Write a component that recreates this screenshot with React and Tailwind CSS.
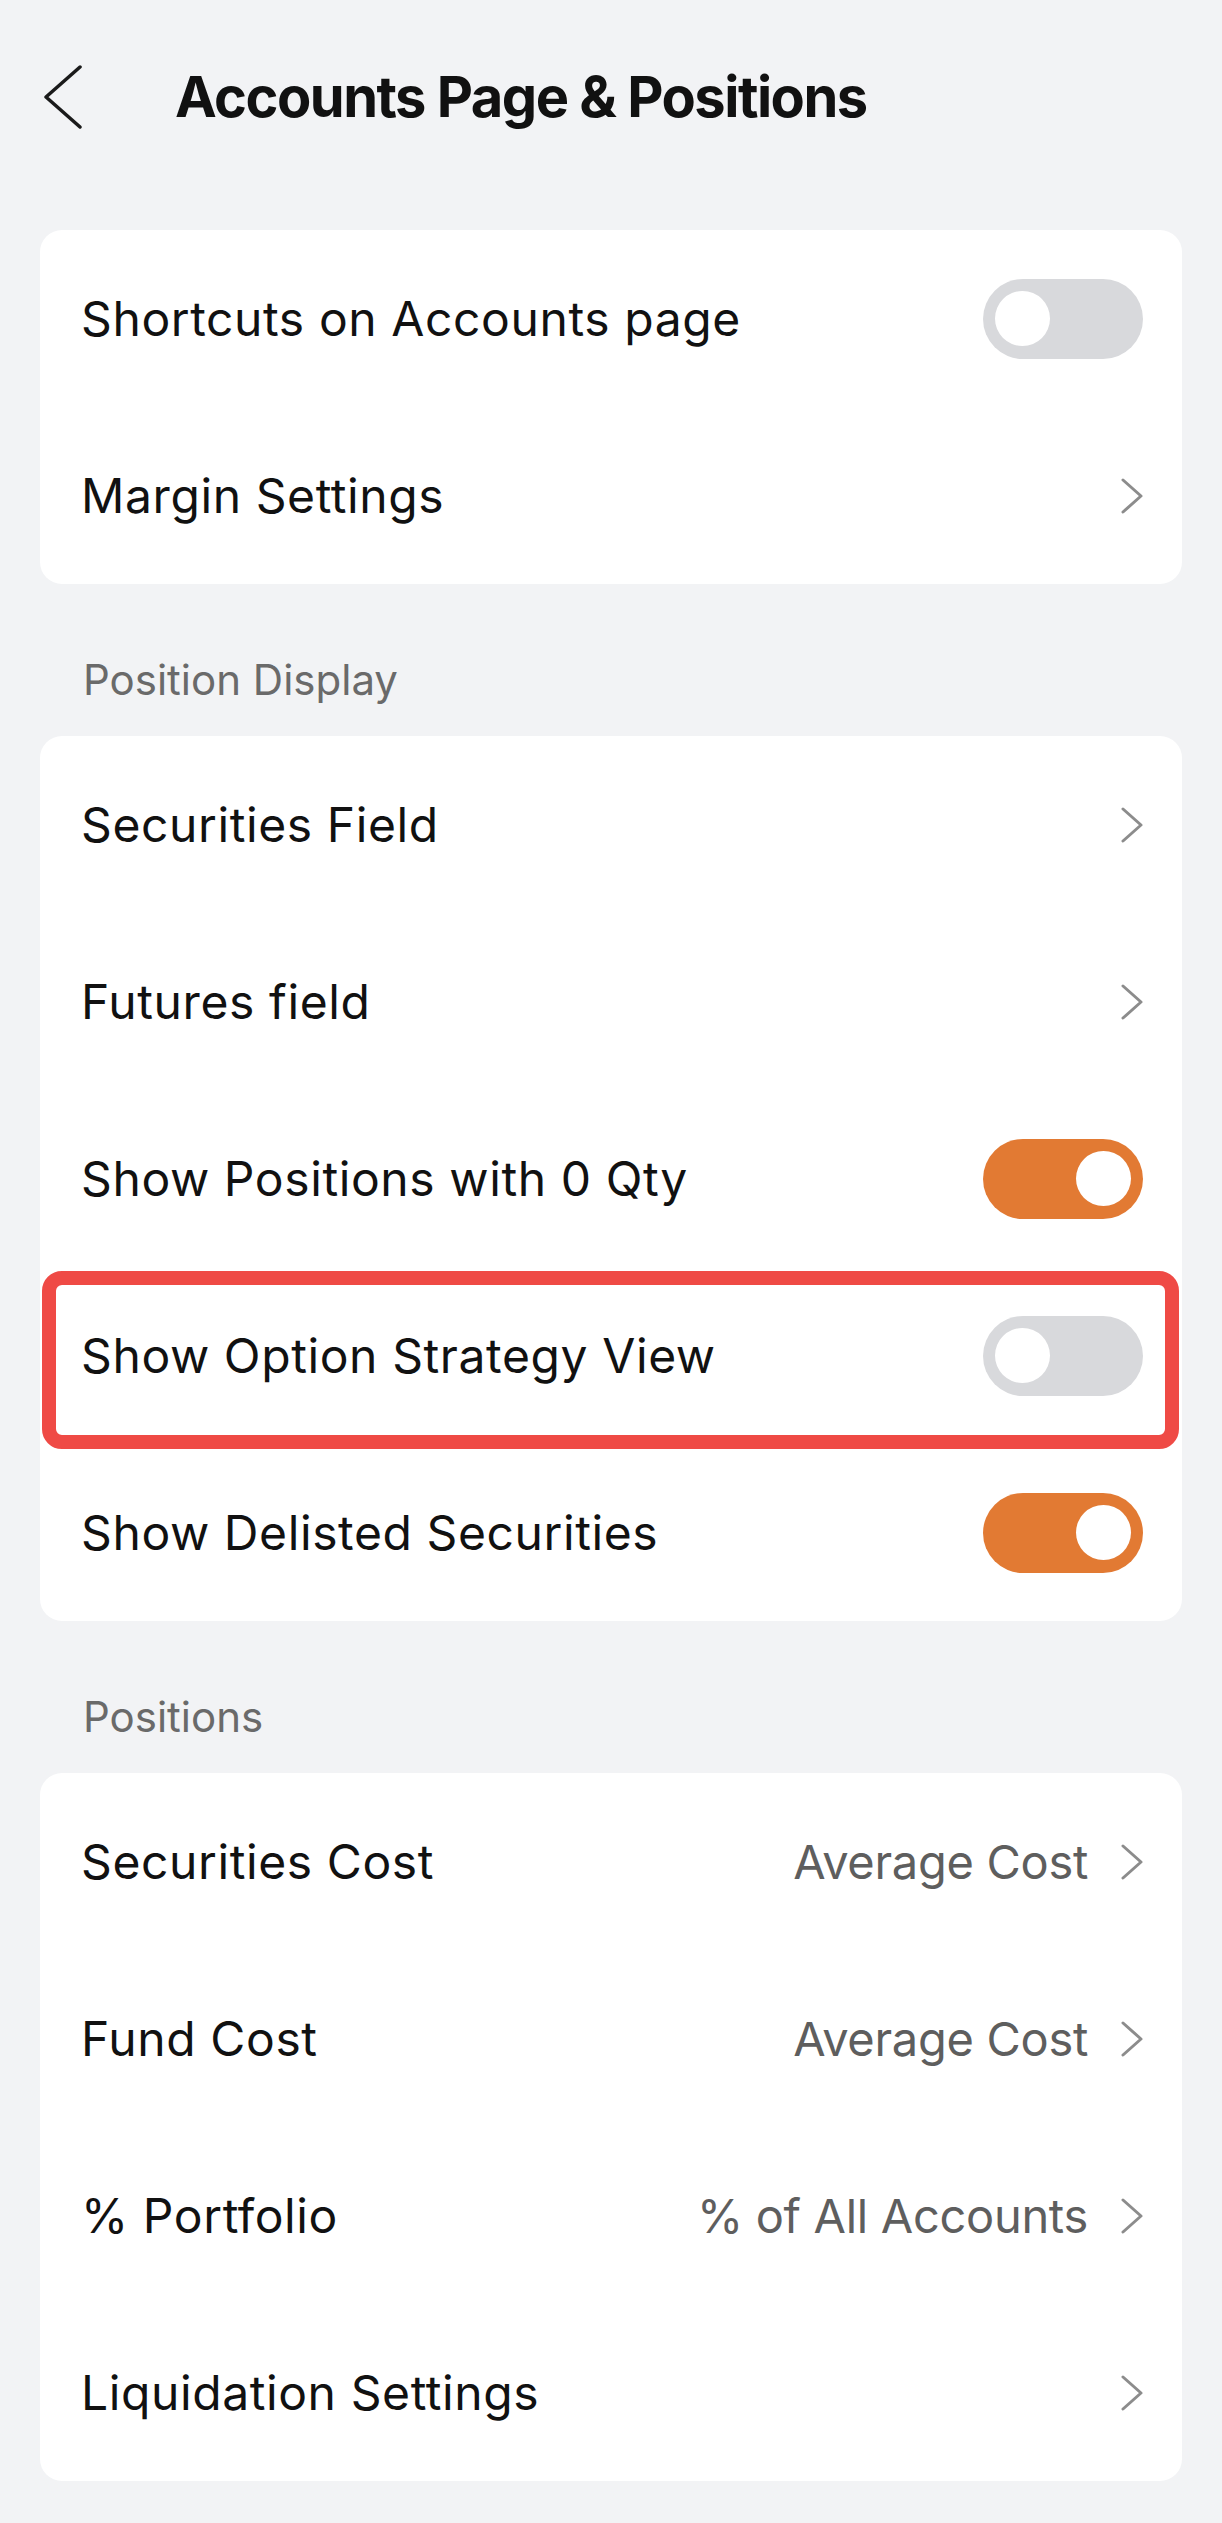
import React from 'react';

function Toggle({ on }) {
  return (
    <div
      className={`flex items-center w-[160px] h-[80px] rounded-full px-[12px] ${
        on ? 'bg-[#e27a33] justify-end' : 'bg-[#d8d9dc] justify-start'
      }`}
    >
      <div className="w-[55px] h-[55px] rounded-full bg-white" />
    </div>
  );
}

function Chevron() {
  return (
    <svg width="22" height="36" viewBox="0 0 22 36" fill="none" className="shrink-0">
      <polyline points="2,2 20,18 2,34" stroke="#8c8c8c" strokeWidth="3" strokeLinecap="round" strokeLinejoin="round" />
    </svg>
  );
}

function Row({ label, toggle, value, chevron, highlight }) {
  return (
    <div className="relative flex items-center justify-between h-[177px] pl-[41px] pr-[39px]">
      <span className="text-[48px] leading-none tracking-[0.6px] text-[#111111]">{label}</span>
      <div className="flex items-center gap-[33px]">
        {value && <span className="text-[47px] leading-none tracking-[-0.3px] text-[#5e5e5e]">{value}</span>}
        {toggle !== undefined && <Toggle on={toggle} />}
        {chevron && <Chevron />}
      </div>
      {highlight && (
        <div className="absolute top-[4px] -bottom-[5px] left-[2px] right-[3px] border-[14px] border-[#ef4a45] rounded-[20px] pointer-events-none" />
      )}
    </div>
  );
}

function Card({ children }) {
  return <div className="bg-white rounded-[22px]">{children}</div>;
}

function SectionLabel({ children }) {
  return (
    <div className="pt-[75px] pb-[35px] pl-[43px] text-[42px] leading-none text-[#6a6a6a]">{children}</div>
  );
}

export default function App() {
  return (
    <div className="min-h-[2523px] bg-[#f2f3f5] px-[40px] pb-[41px] font-['Inter',sans-serif]">
      <header className="flex items-center h-[194px] mb-[36px]">
        <svg width="40" height="64" viewBox="0 0 40 64" fill="none" className="ml-[2px]">
          <polyline points="38,2 4,32 38,62" stroke="#1a1a1a" strokeWidth="3.5" strokeLinecap="round" strokeLinejoin="round" />
        </svg>
        <h1 className="ml-[93px] text-[56px] leading-none font-bold tracking-[-1.5px] text-[#111111]">Accounts Page &amp; Positions</h1>
      </header>

      <Card>
        <Row label="Shortcuts on Accounts page" toggle={false} />
        <Row label="Margin Settings" chevron />
      </Card>

      <SectionLabel>Position Display</SectionLabel>
      <Card>
        <Row label="Securities Field" chevron />
        <Row label="Futures field" chevron />
        <Row label="Show Positions with 0 Qty" toggle={true} />
        <Row label="Show Option Strategy View" toggle={false} highlight />
        <Row label="Show Delisted Securities" toggle={true} />
      </Card>

      <SectionLabel>Positions</SectionLabel>
      <Card>
        <Row label="Securities Cost" value="Average Cost" chevron />
        <Row label="Fund Cost" value="Average Cost" chevron />
        <Row label="% Portfolio" value="% of All Accounts" chevron />
        <Row label="Liquidation Settings" chevron />
      </Card>
    </div>
  );
}
